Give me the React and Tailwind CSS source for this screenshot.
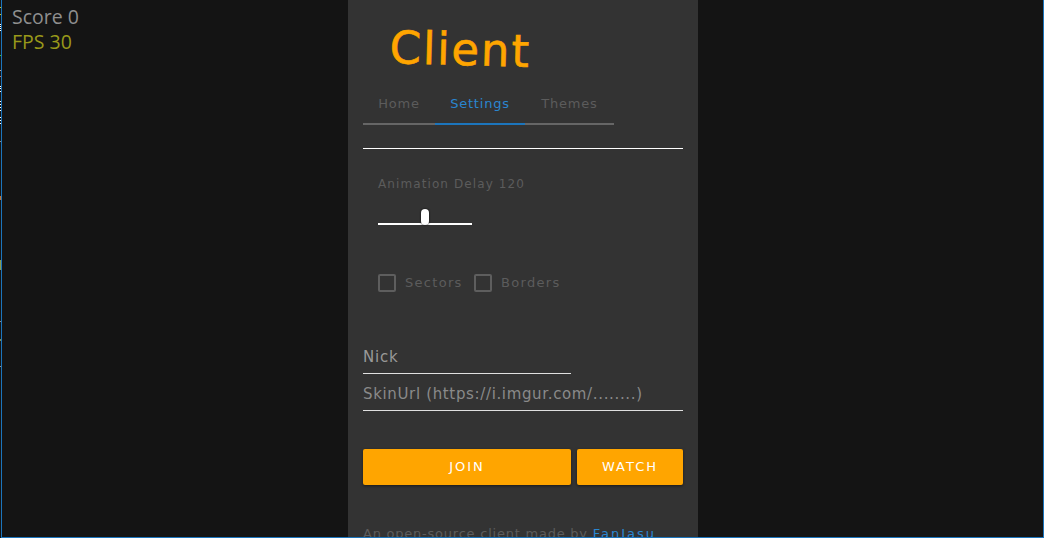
import React from "react";

const ticks = [
  [7, 1, "bg-[#c8c820]"],
  [14, 1, "bg-[#c8c820]"],
  [24, 1, "bg-white"],
  [26, 1, "bg-white"],
  [28, 1, "bg-white"],
  [30, 1, "bg-white"],
  [55, 1, "bg-[#30c030]"],
  [70, 1, "bg-[#c0a0a0]"],
  [76, 1, "bg-[#c07070]"],
  [86, 1, "bg-white"],
  [88, 1, "bg-white"],
  [91, 1, "bg-white"],
  [101, 1, "bg-white"],
  [104, 1, "bg-white"],
  [107, 1, "bg-white"],
  [110, 1, "bg-white"],
  [117, 1, "bg-white"],
  [120, 1, "bg-white"],
  [123, 1, "bg-white"],
  [141, 1, "bg-[#909090]"],
  [196, 4, "bg-[#c07030]"],
  [260, 10, "bg-[#8a9a50]"],
  [321, 1, "bg-[#909090]"],
  [339, 2, "bg-[#7a8a50]"],
  [366, 1, "bg-[#909090]"],
];

const App = () => {
  return (
    <div className="relative h-[538px] w-[1044px] overflow-hidden bg-[#141414] pl-px">
      {/* Edge marks */}
      {ticks.map(([top, height, color]) => (
        <div key={top} className={`absolute left-0 w-px ${color}`} style={{ top, height }} />
      ))}

      <div className="relative h-full overflow-hidden border-x border-b border-[#1c75bc]">
        {/* Stats */}
        <div className="absolute left-[10px] top-[4px] font-['Open_Sans',sans-serif] text-[19.5px] font-medium leading-[25px]">
          <div className="text-[#8f8f8f]">Score 0</div>
          <div className="text-[#99991a]">FPS 30</div>
        </div>

        {/* Panel */}
        <div className="ml-[346px] h-full w-[350px] bg-[#333333] px-[15px] font-['DejaVu_Sans',sans-serif]">
          <div className="w-fit origin-left translate-x-[27px] rotate-[1.6deg] pt-[20px] text-[45px] leading-[56px] tracking-[1.8px] text-[#ffa500] [-webkit-text-stroke:0.6px_#ffa500]">Client</div>

          {/* Tabs */}
          <div className="mt-[4px] flex h-[45px] w-[251px] border-b-2 border-[#666666] text-[13px] tracking-[0.8px]">
            <div className="flex w-[72px] items-center justify-center pt-[5px] text-[#5c5c5c]">Home</div>
            <div className="-mb-[2px] flex w-[90px] items-center justify-center border-b-2 border-[#1c75bc] pt-[5px] text-[#2a86d0]">Settings</div>
            <div className="flex w-[89px] items-center justify-center pt-[5px] text-[#5c5c5c]">Themes</div>
          </div>
          <div className="mt-[23px] h-px w-[320px] bg-white" />

          {/* Settings */}
          <div className="pl-[15px] pt-[27px]">
            <div className="text-[12px] leading-[16px] tracking-[1.1px] text-[#5c5c5c]">Animation Delay 120</div>
            <div className="relative mt-[17px] h-[18px] w-[94px]">
              <div className="absolute bottom-[2px] h-[2px] w-full bg-white" />
              <div className="absolute left-[43px] top-0 h-[16px] w-[8px] rounded-[4px] bg-white shadow-[0_0_2px_#000]" />
            </div>
            <div className="mt-[46px] flex items-center text-[13px] tracking-[1.3px] text-[#5c5c5c]">
              <div className="h-[18px] w-[18px] rounded-[2px] border-2 border-[#5e5e5e]" />
              <span className="ml-[9px] w-[69px]">Sectors</span>
              <div className="h-[18px] w-[18px] rounded-[2px] border-2 border-[#5e5e5e]" />
              <span className="ml-[9px]">Borders</span>
            </div>
          </div>

          {/* Inputs */}
          <div className="mt-[51px] flex h-[30px] w-[208px] items-center border-b border-[#e0e0e0] pb-[2px] text-[15px] tracking-[0.8px] text-[#999999]">Nick</div>
          <div className="mt-[7px] flex h-[30px] w-[320px] items-center border-b border-[#e0e0e0] pb-[2px] text-[15px] tracking-[0.65px] text-[#8a8a8a]">SkinUrl (https://i.imgur.com/........)</div>

          {/* Buttons */}
          <div className="mt-[38px] flex gap-[6px] text-[13px] tracking-[2px] text-white">
            <button className="h-[36px] w-[208px] rounded-[2px] bg-[#ffa500] shadow-[0_1px_3px_rgba(0,0,0,0.5)]">JOIN</button>
            <button className="h-[36px] w-[106px] rounded-[2px] bg-[#ffa500] shadow-[0_1px_3px_rgba(0,0,0,0.5)]">WATCH</button>
          </div>

          <div className="mt-[40px] whitespace-nowrap text-[13px] leading-[18px] tracking-[0.77px] text-[#5c5c5c]">
            An open-source client made by <span className="tracking-[2px] text-[#2a86d0]">FanJasu</span>
          </div>
        </div>
      </div>
    </div>
  );
};

export default App;
